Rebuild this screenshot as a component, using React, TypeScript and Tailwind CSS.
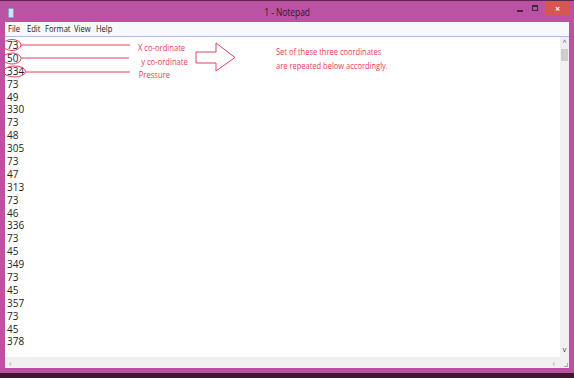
import React from "react";

const numbers = [
  "73", "50", "334", "73", "49", "330", "73", "48", "305", "73", "47", "313",
  "73", "46", "336", "73", "45", "349", "73", "45", "357", "73", "45", "378",
];

// label and the width of its slot in the menu bar
const menuItems: [string, string][] = [
  ["File", "w-[19px]"],
  ["Edit", "w-[18px]"],
  ["Format", "w-[29px]"],
  ["View", "w-[22px]"],
  ["Help", "w-[20px]"],
];

const App = () => {
  return (
    <div
      className="w-[574px] h-[378px] flex flex-col bg-[#bb52a4] overflow-hidden"
      style={{ fontFamily: '"Open Sans", "Noto Sans", sans-serif' }}
    >
      {/* title bar */}
      <div className="h-[22px] flex items-start border-t border-[#5a2350] relative">
        <div className="ml-[8px] mt-[7px] w-[6px] h-[10px] bg-[#cfe3f3] border border-[#7aa6c8] rounded-[1px]" />
        <div className="absolute left-0 right-0 top-[3px] flex justify-center">
          <span className="inline-block text-[11px] text-[#2a1a28] scale-x-[0.76]">1 - Notepad</span>
        </div>
        <div className="ml-auto flex items-start">
          <div className="w-[14px] h-[14px] flex items-center justify-center">
            <div className="w-[6px] h-[2px] bg-[#3a2a3a] mt-[5px]" />
          </div>
          <div className="w-[14px] h-[14px] ml-[1px] flex items-center justify-center">
            <div className="w-[6px] h-[6px] border border-[#3a2a3a] border-t-2" />
          </div>
          <div className="w-[25px] h-[14px] ml-[3px] mr-[4px] bg-[#d6574f] flex items-center justify-center text-white text-[9px] font-bold leading-none">
            ×
          </div>
        </div>
      </div>

      {/* client area */}
      <div className="flex-1 mx-[5px] flex flex-col bg-white">
        <div className="h-[15px] flex items-center pl-[3px] bg-[#f7f8fa] text-[9.5px] text-[#1a1a1a] border-b border-[#a9bde0]">
          {menuItems.map(([m, w]) => (
            <span key={m} className={w + " whitespace-nowrap"}>
              <span className="inline-block origin-left scale-x-[0.8]">{m}</span>
            </span>
          ))}
        </div>
        <div className="flex-1 flex relative">
          <div className="flex-1 pl-[2px] pt-[2px]">
            {numbers.map((n, i) => (
              <div key={i} className="text-[10px] leading-[12.9px] h-[12.9px] text-[#222]">
                {n}
              </div>
            ))}
          </div>

          {/* annotations */}
          <svg
            className="absolute left-0 top-0 overflow-visible"
            width="300"
            height="60"
            viewBox="0 0 300 60"
          >
            <g fill="none" stroke="#e0405e" strokeWidth="1">
              <ellipse cx="7" cy="8" rx="9" ry="5.5" />
              <line x1="16" y1="8" x2="125" y2="8" />
              <ellipse cx="7" cy="21.5" rx="9" ry="5.5" />
              <line x1="16" y1="21" x2="124" y2="21" />
              <ellipse cx="9.5" cy="34.5" rx="11" ry="5.5" />
              <line x1="20.5" y1="35" x2="125" y2="35" />
              <path d="M191 15 H211 V6 L230 20.5 L211 34 V26 H191 Z" />
            </g>
          </svg>
          <div className="absolute left-[133px] top-[4px] text-[9.5px] leading-[13.5px] text-[#e83a55] origin-left scale-x-[0.8] whitespace-nowrap">
            <div>X co-ordinate</div>
            <div className="pl-[4px]">y co-ordinate</div>
            <div className="pl-[1px]">Pressure</div>
          </div>
          <div className="absolute left-[271px] top-[8px] text-[9.5px] leading-[14px] text-[#e83a55] origin-left scale-x-[0.79] whitespace-nowrap">
            <div>Set of these three coordinates</div>
            <div>are repeated below accordingly.</div>
          </div>

          {/* vertical scrollbar */}
          <div className="w-[9px] bg-[#f0f0f0] flex flex-col items-center">
            <span className="text-[7px] leading-[10px] text-[#555] mt-[1px]">^</span>
            <div className="w-[7px] h-[12px] bg-[#cdcdcd] mt-[1px]" />
            <div className="flex-1" />
            <span className="text-[7px] leading-[10px] text-[#333] mb-[2px]">v</span>
          </div>
        </div>
        {/* horizontal scrollbar */}
        <div className="h-[11px] flex items-center bg-[#f0f0f0] text-[8px] text-[#888]">
          <span className="ml-[4px]">‹</span>
          <span className="ml-auto mr-[5px]">›</span>
          <div className="w-[9px] h-full bg-[#f0f0f0] flex items-end justify-end">
            <div className="w-[4px] h-[4px] border-r border-b border-[#aaa] mb-[1px] mr-[1px]" />
          </div>
        </div>
      </div>

      {/* bottom frame */}
      <div className="h-[5px]" />
      <div className="h-[5px] bg-[#40182f]" />
    </div>
  );
};

export default App;
